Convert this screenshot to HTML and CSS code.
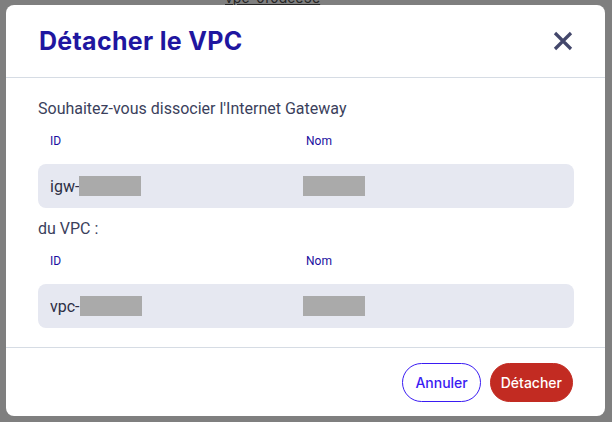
FILE: index.html
```html
<!DOCTYPE html>
<html lang="fr">

<head>
    <meta charset="UTF-8">
    <meta name="viewport" content="width=device-width, initial-scale=1.0">
    <title>Détacher le VPC</title>
    <link rel="stylesheet" href="styles.css">
</head>

<body>
    <div class="page-peek">
        <a href="#" class="peek-link">vpc-0f0dce5e</a>
    </div>

    <div class="modal">
        <header class="modal-header">
            <h2 class="modal-title">Détacher le VPC</h2>
            <button type="button" class="close-btn" aria-label="Fermer">
                <svg width="20" height="20" viewBox="0 0 20 20">
                    <path d="M2 2 L18 18 M18 2 L2 18" stroke="#43476b" stroke-width="3.2" fill="none" />
                </svg>
            </button>
        </header>

        <div class="modal-body">
            <p class="question">Souhaitez-vous dissocier l'Internet Gateway</p>
            <div class="resource-table">
                <div class="resource-labels">
                    <span>ID</span>
                    <span>Nom</span>
                </div>
                <div class="resource-row">
                    <span class="resource-id">igw-<span class="redacted"></span></span>
                    <span class="redacted"></span>
                </div>
            </div>

            <p class="question question-next">du VPC :</p>
            <div class="resource-table">
                <div class="resource-labels">
                    <span>ID</span>
                    <span>Nom</span>
                </div>
                <div class="resource-row">
                    <span class="resource-id">vpc-<span class="redacted"></span></span>
                    <span class="redacted"></span>
                </div>
            </div>
        </div>

        <footer class="modal-footer">
            <button type="button" class="btn btn-outline">Annuler</button>
            <button type="button" class="btn btn-danger">Détacher</button>
        </footer>
    </div>
</body>

</html>
```

FILE: styles.css
```css
body {
    margin: 0;
    height: 422px;
    overflow: hidden;
    background-color: #7f7f7f;
    font-family: Roboto, "Liberation Sans", sans-serif;
}

.page-peek {
    height: 5px;
    overflow: hidden;
    display: flex;
    align-items: flex-end;
    padding-left: 225px;
}

.peek-link {
    font-family: Inter, sans-serif;
    font-size: 14px;
    line-height: 15px;
    color: #262626;
    text-decoration: underline;
}

.modal {
    width: 599px;
    margin-left: 6px;
    background: #ffffff;
    border-radius: 8px;
}

.modal-header {
    height: 72px;
    display: flex;
    align-items: center;
    justify-content: space-between;
    padding: 0 32px 0 33px;
    border-bottom: 1px solid #d6dce4;
}

.modal-title {
    margin: 0;
    font-family: Inter, sans-serif;
    font-size: 25px;
    font-weight: 700;
    color: #1f16a0;
    letter-spacing: 0.3px;
}

.close-btn {
    border: none;
    background: none;
    padding: 0;
    width: 20px;
    height: 20px;
    display: flex;
}

.modal-body {
    padding: 21px 31px 19px 32px;
    border-bottom: 1px solid #d6dce4;
}

.question {
    margin: 0;
    font-size: 16px;
    line-height: 20px;
    color: #3b3f5c;
}

.question-next {
    margin-top: 11px;
}

.resource-table {
    margin-top: 14px;
}

.resource-labels {
    display: grid;
    grid-template-columns: 256px 1fr;
    padding: 0 12px;
    font-size: 12px;
    line-height: 16px;
    color: #1a0fa0;
}

.resource-row {
    margin-top: 15px;
    height: 44px;
    display: grid;
    grid-template-columns: 253px 1fr;
    align-items: center;
    padding: 0 12px;
    background: #e6e8f1;
    border-radius: 8px;
    font-size: 16px;
    color: #2d2f45;
}

.resource-id {
    display: flex;
    align-items: center;
}

.redacted {
    display: inline-block;
    width: 62px;
    height: 20px;
    background: #aaaaaa;
}

.modal-footer {
    display: flex;
    justify-content: flex-end;
    gap: 9px;
    padding: 15px 32px 14px;
}

.btn {
    height: 39px;
    border-radius: 20px;
    font-family: Inter, sans-serif;
    font-size: 14px;
    font-weight: 500;
}

.btn-outline {
    background: #ffffff;
    border: 1px solid #3a1cf3;
    color: #3a1cf3;
    padding: 0 12px;
}

.btn-danger {
    background: #c22b22;
    border: 1px solid #c22b22;
    color: #ffffff;
    padding: 0 10px;
}
```
